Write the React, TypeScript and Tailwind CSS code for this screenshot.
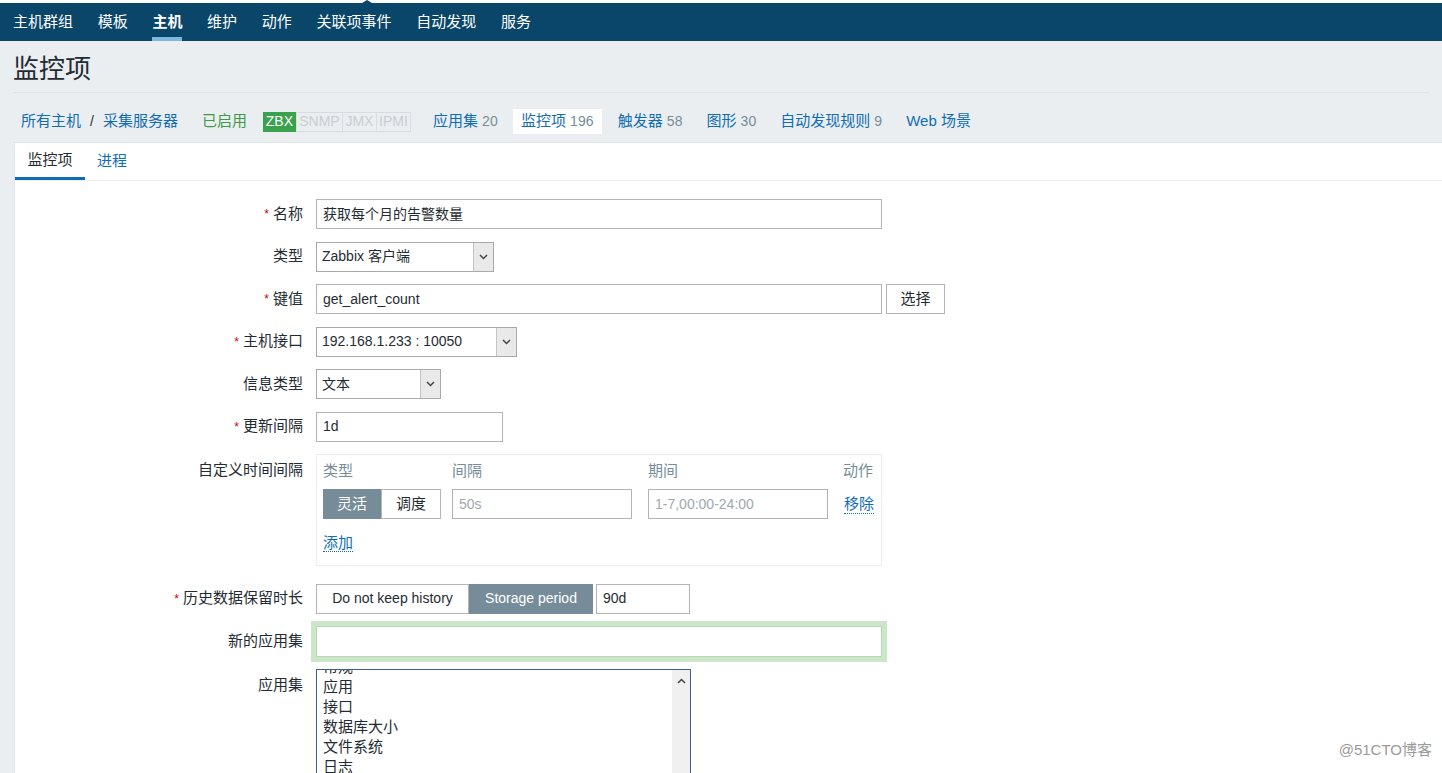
import React from "react";

const font = {
  fontFamily: '"Liberation Sans", Arial, "Noto Sans CJK SC", sans-serif',
};

const navItems = ["主机群组", "模板", "主机", "维护", "动作", "关联项事件", "自动发现", "服务"];

const Chevron = ({ up = false }: { up?: boolean }) => (
  <svg width="9" height="6" viewBox="0 0 9 6" className={up ? "rotate-180" : ""}>
    <path d="M1 1l3.5 3.5L8 1" fill="none" stroke="#444" strokeWidth="1.5" />
  </svg>
);

const Select = ({ value, w }: { value: string; w: string }) => (
  <div className={`flex h-[30px] ${w} border border-[#a9a9a9] bg-white`}>
    <div className="flex-1 flex items-center pl-[5px] text-[14px] text-[#1f2c33]">{value}</div>
    <div className="w-[20px] flex items-center justify-center bg-[#e9e9e9] border-l border-[#c4c4c4]">
      <Chevron />
    </div>
  </div>
);

const Label = ({ text, req = false, top = false }: { text: string; req?: boolean; top?: boolean }) => (
  <div
    className={`w-[288px] shrink-0 flex justify-end text-[15px] text-[#1f2c33] ${
      top ? "items-start pt-[5px]" : "items-center"
    }`}
  >
    {req && <span className="text-[#d40000] mr-[4px] text-[12px]">*</span>}
    {text}
  </div>
);

const Row = ({ children, className = "" }: { children: React.ReactNode; className?: string }) => (
  <div className={`flex gap-[13px] ${className}`}>{children}</div>
);

const Input = ({ value, w, muted = false }: { value: string; w: string; muted?: boolean }) => (
  <div
    className={`h-[30px] ${w} border border-[#b4b4b4] bg-white flex items-center pl-[6px] text-[14px] ${
      muted ? "text-[#a0a8ad]" : "text-[#1f2c33]"
    }`}
  >
    {value}
  </div>
);

const Num = ({ n }: { n: string }) => <span className="text-[14px] text-[#768d99]">{n}</span>;

export default function App() {
  return (
    <div className="w-[1442px] h-[773px] overflow-hidden bg-[#ebeef0] relative" style={font}>
      <div className="h-[3px] bg-white relative">
        <div className="absolute left-[362px] top-0 w-0 h-0 border-l-[5px] border-r-[5px] border-b-[3px] border-l-transparent border-r-transparent border-b-[#0a466a]" />
      </div>
      <nav className="h-[38px] bg-[#0a466a] flex items-stretch pl-[13px] gap-[24.7px] text-white text-[15px]">
        {navItems.map((n) => (
          <div key={n} className={`flex items-center relative ${n === "主机" ? "font-bold" : ""}`}>
            {n}
            {n === "主机" && <div className="absolute left-0 right-0 bottom-0 h-[4px] bg-[#7fb7e3]" />}
          </div>
        ))}
      </nav>

      <div className="px-[13px]">
        <div className="h-[52px] flex items-center pt-[5px] text-[26px] text-[#1f2c33] border-b border-[#dde2e5]">
          监控项
        </div>
      </div>

      <div className="flex items-center h-[25px] mt-[16px] ml-[21px] text-[15px]">
        <span className="text-[#0f6db3]">所有主机</span>
        <span className="mx-[9px] text-[#1f2c33] text-[14px]">/</span>
        <span className="text-[#0f6db3]">采集服务器</span>
        <span className="ml-[24px] text-[#3f9a48]">已启用</span>
        <div className="ml-[16px] flex h-[20px] text-[14px]">
          <span className="w-[33px] bg-[#3aa14d] text-white flex items-center justify-center">ZBX</span>
          <span className="w-[47px] border border-[#d7dde0] text-[#c7ced2] flex items-center justify-center">SNMP</span>
          <span className="w-[34px] border-y border-r border-[#d7dde0] text-[#c7ced2] flex items-center justify-center">JMX</span>
          <span className="w-[34px] border-y border-r border-[#d7dde0] text-[#c7ced2] flex items-center justify-center">IPMI</span>
        </div>
        <span className="ml-[22px] text-[#0f6db3]">
          应用集 <Num n="20" />
        </span>
        <span className="ml-[15px] bg-white h-[25px] w-[89px] flex items-center justify-center text-[#0f6db3]">
          监控项&nbsp;<Num n="196" />
        </span>
        <span className="ml-[16px] text-[#0f6db3]">
          触发器 <Num n="58" />
        </span>
        <span className="ml-[24px] text-[#0f6db3]">
          图形 <Num n="30" />
        </span>
        <span className="ml-[24px] text-[#0f6db3]">
          自动发现规则 <Num n="9" />
        </span>
        <span className="ml-[24px] text-[#0f6db3]">Web 场景</span>
      </div>

      <div className="ml-[14px] mt-[8px] bg-white border-l border-t border-[#dfe4e7] h-[700px]">
        <div className="flex h-[38px] border-b border-[#ebeef0] text-[15px]">
          <div className="w-[70px] flex items-center justify-center text-[#1f2c33] border-b-[3px] border-[#0f6db3]">
            监控项
          </div>
          <div className="px-[12px] flex items-center text-[#0f6db3]">进程</div>
        </div>

        <div className="pt-[18px] flex flex-col gap-[12.5px]">
          <Row>
            <Label text="名称" req />
            <Input value="获取每个月的告警数量" w="w-[566px]" />
          </Row>
          <Row>
            <Label text="类型" />
            <Select value="Zabbix 客户端" w="w-[178px]" />
          </Row>
          <Row>
            <Label text="键值" req />
            <div className="flex gap-[4px]">
              <Input value="get_alert_count" w="w-[566px]" />
              <div className="h-[30px] w-[59px] border border-[#b4b4b4] bg-white flex items-center justify-center text-[15px] text-[#1f2c33]">
                选择
              </div>
            </div>
          </Row>
          <Row>
            <Label text="主机接口" req />
            <Select value="192.168.1.233 : 10050" w="w-[201px]" />
          </Row>
          <Row>
            <Label text="信息类型" />
            <Select value="文本" w="w-[125px]" />
          </Row>
          <Row>
            <Label text="更新间隔" req />
            <Input value="1d" w="w-[187px]" />
          </Row>
          <Row>
            <Label text="自定义时间间隔" top />
            <div className="w-[566px] h-[112px] border border-[#ebeef0] px-[6px] pt-[6px] text-[15px]">
              <div className="flex text-[#768d99] h-[20px] items-center">
                <span className="w-[129px]">类型</span>
                <span className="w-[196px]">间隔</span>
                <span className="w-[195px]">期间</span>
                <span>动作</span>
              </div>
              <div className="flex items-center mt-[8px]">
                <div className="flex h-[30px] w-[118px]">
                  <div className="flex-1 bg-[#768d99] text-white flex items-center justify-center">灵活</div>
                  <div className="flex-1 border border-[#b4b4b4] text-[#1f2c33] flex items-center justify-center">
                    调度
                  </div>
                </div>
                <div className="ml-[11px]">
                  <Input value="50s" w="w-[180px]" muted />
                </div>
                <div className="ml-[16px]">
                  <Input value="1-7,00:00-24:00" w="w-[180px]" muted />
                </div>
                <span className="ml-[16px] text-[#0f6db3] border-b border-dotted border-[#0f6db3] leading-[18px]">
                  移除
                </span>
              </div>
              <div className="mt-[13px]">
                <span className="text-[#0f6db3] border-b border-dotted border-[#0f6db3] leading-[18px]">
                  添加
                </span>
              </div>
            </div>
          </Row>
          <Row className="mt-[5px]">
            <Label text="历史数据保留时长" req />
            <div className="flex items-center gap-[3px]">
              <div className="flex h-[30px] text-[14px]">
                <div className="w-[153px] border border-[#b4b4b4] flex items-center justify-center text-[#1f2c33]">
                  Do not keep history
                </div>
                <div className="w-[124px] bg-[#768d99] text-white flex items-center justify-center">
                  Storage period
                </div>
              </div>
              <Input value="90d" w="w-[94px]" />
            </div>
          </Row>
          <Row>
            <Label text="新的应用集" />
            <div className="h-[31px] w-[566px] border border-[#b9d9b4] bg-white shadow-[0_0_0_5px_#cbe6c8]" />
          </Row>
          <Row className="-mt-[1px]">
            <Label text="应用集" top />
            <div className="w-[375px] h-[120px] border border-[#3d5f80] bg-white flex overflow-hidden">
              <div className="flex-1 pl-[6px] text-[15px] text-[#1f2c33] leading-[20px] -mt-[13px]">
                <div>常规</div>
                <div>应用</div>
                <div>接口</div>
                <div>数据库大小</div>
                <div>文件系统</div>
                <div>日志</div>
                <div>网络</div>
              </div>
              <div className="w-[18px] bg-[#f0f0f0] flex justify-center pt-[8px]">
                <Chevron up />
              </div>
            </div>
          </Row>
        </div>
      </div>

      <div className="absolute right-[10px] bottom-[12px] text-[15px] text-[#9a9a9a]">@51CTO博客</div>
    </div>
  );
}
